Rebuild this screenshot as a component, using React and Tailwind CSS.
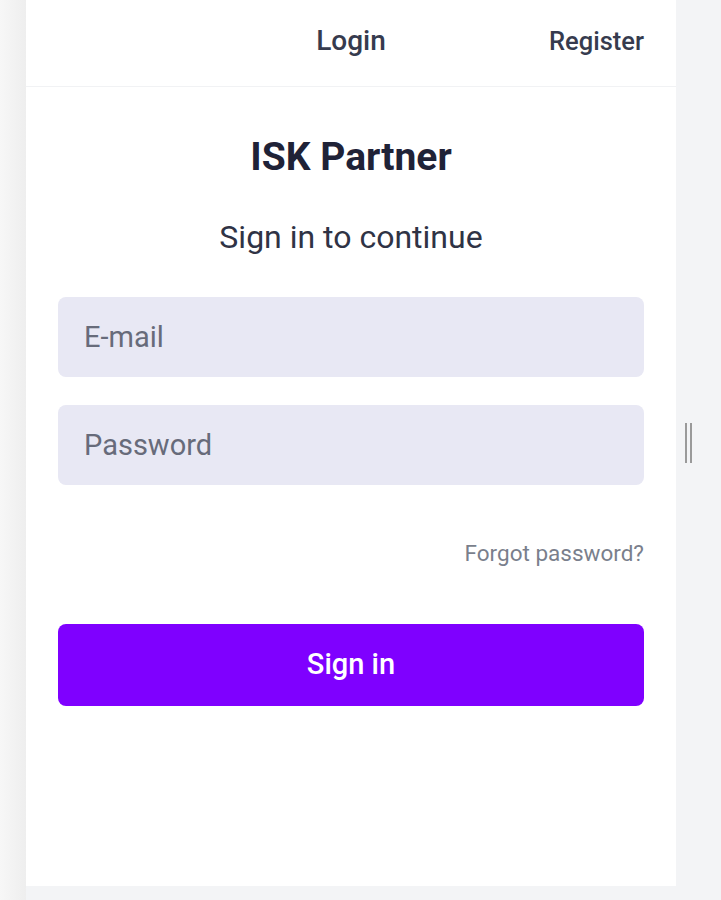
export default function App() {
  return (
    <div className="flex h-[900px] w-[721px] overflow-hidden bg-[#f3f4f6] font-['Roboto',sans-serif]">
      {/* left gutter */}
      <div className="w-[26px] shrink-0 bg-gradient-to-r from-[#f7f7f7] to-[#eeeeee]" />

      {/* main panel */}
      <div className="flex h-[886px] w-[650px] shrink-0 flex-col bg-white">
        <div className="grid h-[87px] grid-cols-3 items-center border-b border-[#f1f2f4] pb-1">
          <div />
          <button className="text-center text-[28px] font-medium text-[#363b4e]">Login</button>
          <button className="pr-[32px] text-right text-[25.5px] font-medium text-[#363b4e]">Register</button>
        </div>

        <div className="flex flex-col px-[32px]">
          <h1 className="mt-[46px] text-center text-[39px] font-bold leading-[48px] text-[#1f2237]">ISK Partner</h1>
          <p className="mt-[38px] text-center text-[32px] leading-[36px] text-[#2f3345]">Sign in to continue</p>

          <div className="mt-[42px] flex flex-col gap-[28px]">
            <input
              type="email"
              placeholder="E-mail"
              className="h-[80px] w-full rounded-[8px] bg-[#e8e8f4] px-[26px] text-[29px] text-[#374151] outline-none placeholder:text-[#676b7a]"
            />
            <input
              type="password"
              placeholder="Password"
              className="h-[80px] w-full rounded-[8px] bg-[#e8e8f4] px-[26px] text-[29px] text-[#374151] outline-none placeholder:text-[#676b7a]"
            />
          </div>

          <div className="mt-[52px] flex justify-end">
            <a className="text-[22.5px] text-[#7a7f8c]">Forgot password?</a>
          </div>

          <button className="mt-[53px] h-[82px] w-full rounded-[8px] bg-[#7f00ff] text-[29px] font-medium text-white">
            Sign in
          </button>
        </div>
      </div>

      {/* right strip with grip */}
      <div className="flex h-[886px] flex-1 items-center pl-[9px]">
        <div className="flex h-[40px] w-[9px] gap-[3px]">
          <div className="w-[2px] bg-[#9a9a9a]" />
          <div className="w-[2px] bg-[#9a9a9a]" />
        </div>
      </div>
    </div>
  );
}
